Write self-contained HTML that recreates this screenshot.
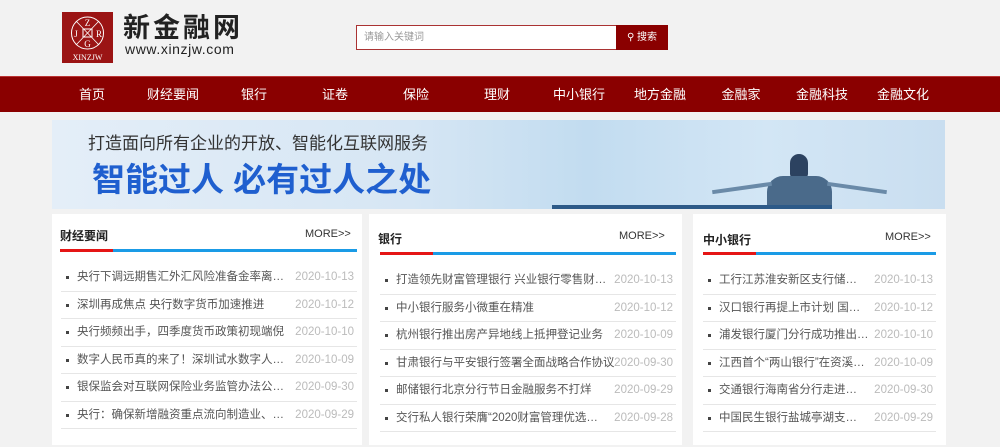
<!DOCTYPE html>
<html><head><meta charset="utf-8"><style>
*{margin:0;padding:0;box-sizing:border-box}
body{width:1000px;height:445px;overflow:hidden;background:#f2f2f2;font-family:"Liberation Sans","Noto Sans CJK SC",sans-serif;position:relative}
.a{position:absolute}
.logo{left:62px;top:12px;width:51px;height:51px;background:#9b1414;color:#fff}
.nav{left:0;top:76px;width:1000px;height:36px;background:#8a0000;border-top:1px solid #b33;}
.nav span{position:absolute;top:0;line-height:36px;color:#fff;font-size:13px;transform:translateX(-50%);white-space:nowrap}
.col{background:#fff}
.h{font-size:12px;font-weight:bold;color:#222}
.more{font-size:11px;color:#333}
.line{height:3px;background:#1a9be6}
.line i{display:block;width:53px;height:3px;background:#e51515}
.row{position:absolute;height:27.5px;border-bottom:1px solid #e6e6e6;font-size:11.5px;color:#555;line-height:27px}
.row b{position:absolute;left:5px;top:12px;width:3px;height:3px;background:#444}
.row .t{position:absolute;left:16px;white-space:nowrap;overflow:hidden;text-overflow:ellipsis}
.row .d{position:absolute;right:3px;color:#bbb;font-size:11.5px}
</style></head><body>
<div class="a logo">
<svg width="51" height="51" viewBox="0 0 51 51"><circle cx="25.5" cy="21" r="16" fill="none" stroke="#fff" stroke-width="1"/><line x1="14" y1="9" x2="37" y2="33" stroke="#fff" stroke-width=".8"/><line x1="37" y1="9" x2="14" y2="33" stroke="#fff" stroke-width=".8"/><rect x="21" y="17" width="9" height="8" fill="none" stroke="#fff"/>
<text x="25.5" y="14" font-size="9" fill="#fff" text-anchor="middle" font-family="Liberation Serif">Z</text>
<text x="14" y="25" font-size="9" fill="#fff" text-anchor="middle" font-family="Liberation Serif">J</text>
<text x="37" y="25" font-size="9" fill="#fff" text-anchor="middle" font-family="Liberation Serif">R</text>
<text x="25.5" y="35" font-size="9" fill="#fff" text-anchor="middle" font-family="Liberation Serif">G</text>
<text x="25.5" y="48" font-size="8" fill="#fff" text-anchor="middle" font-family="Liberation Serif">XINZJW</text></svg></div>
<div class="a" style="left:123px;top:13px;font-size:27px;line-height:30px;font-weight:bold;color:#222;letter-spacing:3px">新金融网</div>
<div class="a" style="left:125px;top:41px;font-size:14px;line-height:16px;color:#222;letter-spacing:.6px">www.xinzjw.com</div>
<div class="a" style="left:356px;top:25px;width:261px;height:25px;border:1px solid #a33;background:#fff;font-size:10px;color:#999;line-height:23px;padding-left:7px">请输入关键词</div>
<div class="a" style="left:616px;top:25px;width:52px;height:25px;background:#8a0000;color:#fff;font-size:10px;line-height:25px;text-align:center">⚲ 搜索</div>
<div class="a nav">
<span style="left:92px">首页</span><span style="left:173px">财经要闻</span><span style="left:254px">银行</span><span style="left:335px">证卷</span><span style="left:416px">保险</span><span style="left:497px">理财</span><span style="left:579px">中小银行</span><span style="left:660px">地方金融</span><span style="left:741px">金融家</span><span style="left:822px">金融科技</span><span style="left:903px">金融文化</span>
</div>
<div class="a" style="left:52px;top:120px;width:893px;height:89px;background:linear-gradient(90deg,#e4eef8 0%,#d6e6f4 40%,#c2dcf0 60%,#d3e6f5 80%,#c9def0 100%)">
<div class="a" style="left:36px;top:9px;font-size:17px;color:#333">打造面向所有企业的开放、智能化互联网服务</div>
<div class="a" style="left:40px;top:33px;font-size:33px;font-weight:bold;color:#1f5fcf">智能过人 必有过人之处</div>
<div class="a" style="left:738px;top:34px;width:18px;height:24px;border-radius:9px 9px 4px 4px;background:#2c4260"></div>
<div class="a" style="left:715px;top:56px;width:65px;height:33px;border-radius:16px 16px 0 0;background:#4a6a8a"></div>
<div class="a" style="left:660px;top:66px;width:60px;height:4px;background:#6a8aa8;transform:rotate(-8deg)"></div>
<div class="a" style="left:775px;top:66px;width:60px;height:4px;background:#6a8aa8;transform:rotate(8deg)"></div>
<div class="a" style="left:500px;top:85px;width:280px;height:4px;background:#2d5a88"></div>
</div>

<div class="a col" style="left:52px;top:214px;width:310px;height:231px"></div>
<div class="a col" style="left:369px;top:214px;width:313px;height:231px"></div>
<div class="a col" style="left:693px;top:214px;width:253px;height:231px"></div>

<div class="a h" style="left:60px;top:227px">财经要闻</div>
<div class="a more" style="left:305px;top:228px">MORE&gt;&gt;</div>
<div class="a line" style="left:60px;top:249px;width:297px"><i></i></div>

<div class="a h" style="left:378px;top:230px">银行</div>
<div class="a more" style="left:619px;top:230px">MORE&gt;&gt;</div>
<div class="a line" style="left:380px;top:252px;width:296px"><i></i></div>

<div class="a h" style="left:703px;top:231px">中小银行</div>
<div class="a more" style="left:885px;top:231px">MORE&gt;&gt;</div>
<div class="a line" style="left:703px;top:252px;width:233px"><i></i></div>

<div class="a" style="left:61px;top:264px;width:296px;height:180px">
<div class="row" style="top:0;width:296px"><b></b><span class="t" style="width:212px">央行下调远期售汇外汇风险准备金率离岸人民币</span><span class="d">2020-10-13</span></div>
<div class="row" style="top:27.5px;width:296px"><b></b><span class="t">深圳再成焦点 央行数字货币加速推进</span><span class="d">2020-10-12</span></div>
<div class="row" style="top:55px;width:296px"><b></b><span class="t">央行频频出手，四季度货币政策初现端倪</span><span class="d">2020-10-10</span></div>
<div class="row" style="top:82.5px;width:296px"><b></b><span class="t" style="width:212px">数字人民币真的来了！深圳试水数字人民币红包</span><span class="d">2020-10-09</span></div>
<div class="row" style="top:110px;width:296px"><b></b><span class="t" style="width:212px">银保监会对互联网保险业务监管办法公开征求意见</span><span class="d">2020-09-30</span></div>
<div class="row" style="top:137.5px;width:296px"><b></b><span class="t" style="width:212px">央行：确保新增融资重点流向制造业、中小微企业</span><span class="d">2020-09-29</span></div>
</div>

<div class="a" style="left:380px;top:267px;width:296px;height:180px">
<div class="row" style="top:0;width:296px"><b></b><span class="t" style="width:212px">打造领先财富管理银行 兴业银行零售财富综合</span><span class="d">2020-10-13</span></div>
<div class="row" style="top:27.5px;width:296px"><b></b><span class="t">中小银行服务小微重在精准</span><span class="d">2020-10-12</span></div>
<div class="row" style="top:55px;width:296px"><b></b><span class="t">杭州银行推出房产异地线上抵押登记业务</span><span class="d">2020-10-09</span></div>
<div class="row" style="top:82.5px;width:296px"><b></b><span class="t">甘肃银行与平安银行签署全面战略合作协议</span><span class="d">2020-09-30</span></div>
<div class="row" style="top:110px;width:296px"><b></b><span class="t">邮储银行北京分行节日金融服务不打烊</span><span class="d">2020-09-29</span></div>
<div class="row" style="top:137.5px;width:296px"><b></b><span class="t" style="width:212px">交行私人银行荣膺“2020财富管理优选私人银行</span><span class="d">2020-09-28</span></div>
</div>

<div class="a" style="left:703px;top:267px;width:233px;height:180px">
<div class="row" style="top:0;width:233px"><b></b><span class="t" style="width:146px">工行江苏淮安新区支行储蓄存款</span><span class="d">2020-10-13</span></div>
<div class="row" style="top:27.5px;width:233px"><b></b><span class="t" style="width:146px">汉口银行再提上市计划 国有股东</span><span class="d">2020-10-12</span></div>
<div class="row" style="top:55px;width:233px"><b></b><span class="t" style="width:150px">浦发银行厦门分行成功推出“认证</span><span class="d">2020-10-10</span></div>
<div class="row" style="top:82.5px;width:233px"><b></b><span class="t" style="width:146px">江西首个“两山银行”在资溪挂牌</span><span class="d">2020-10-09</span></div>
<div class="row" style="top:110px;width:233px"><b></b><span class="t" style="width:146px">交通银行海南省分行走进扶贫点</span><span class="d">2020-09-30</span></div>
<div class="row" style="top:137.5px;width:233px"><b></b><span class="t" style="width:146px">中国民生银行盐城亭湖支行盛大</span><span class="d">2020-09-29</span></div>
</div>
</body></html>
